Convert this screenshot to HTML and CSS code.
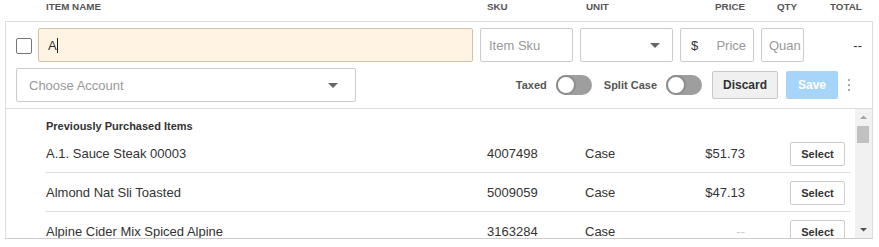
FILE: index.html
```html
<!DOCTYPE html>
<html lang="en">
<head>
    <meta charset="UTF-8">
    <meta name="viewport" content="width=device-width, initial-scale=1.0">
    <title>Add Item</title>
    <link rel="stylesheet" href="styles.css">
</head>
<body>
    <div class="header-row">
        <div></div>
        <div class="col-label label-name">Item Name</div>
        <div class="col-label label-sku">SKU</div>
        <div class="col-label label-unit">Unit</div>
        <div class="col-label label-price">Price</div>
        <div class="col-label label-qty">Qty</div>
        <div class="col-label label-total">Total</div>
    </div>

    <div class="item-box">
        <div class="entry-row">
            <span class="checkbox"></span>
            <div class="field field-name">A<span class="caret-line"></span></div>
            <div class="field placeholder">Item Sku</div>
            <div class="field select"><span></span><span class="arrow"></span></div>
            <div class="field price"><span class="dollar">$</span><span class="placeholder">Price</span></div>
            <div class="field placeholder qty">Quan</div>
            <div class="total">--</div>
        </div>

        <div class="options-row">
            <div class="field select account"><span class="placeholder">Choose Account</span><span class="arrow"></span></div>
            <div class="options-right">
                <span class="opt-label">Taxed</span>
                <span class="toggle"><span class="knob"></span></span>
                <span class="opt-label split">Split Case</span>
                <span class="toggle"><span class="knob"></span></span>
                <button class="btn btn-discard">Discard</button>
                <button class="btn btn-save">Save</button>
                <svg class="kebab" width="4" height="12" viewBox="0 0 4 12">
                    <rect x="1" y="0" width="2" height="2" fill="#aaa"/>
                    <rect x="1" y="5" width="2" height="2" fill="#aaa"/>
                    <rect x="1" y="10" width="2" height="2" fill="#aaa"/>
                </svg>
            </div>
        </div>

        <div class="list-area">
            <div class="list-content">
                <div class="list-title">Previously Purchased Items</div>
                <div class="list-row">
                    <span class="c-name">A.1. Sauce Steak 00003</span>
                    <span class="c-sku">4007498</span>
                    <span class="c-unit">Case</span>
                    <span class="c-price">$51.73</span>
                    <button class="btn-select">Select</button>
                </div>
                <div class="list-row">
                    <span class="c-name">Almond Nat Sli Toasted</span>
                    <span class="c-sku">5009059</span>
                    <span class="c-unit">Case</span>
                    <span class="c-price">$47.13</span>
                    <button class="btn-select">Select</button>
                </div>
                <div class="list-row">
                    <span class="c-name">Alpine Cider Mix Spiced Alpine</span>
                    <span class="c-sku">3163284</span>
                    <span class="c-unit">Case</span>
                    <span class="c-price empty">--</span>
                    <button class="btn-select">Select</button>
                </div>
            </div>
            <div class="scrollbar">
                <svg width="17" height="17" viewBox="0 0 17 17"><path d="M5 10 L8.5 6.5 L12 10 Z" fill="#a3a3a3"/></svg>
                <div class="thumb"></div>
                <div class="track-fill"></div>
                <svg width="17" height="17" viewBox="0 0 17 17"><path d="M5 7 L12 7 L8.5 10.5 Z" fill="#505050"/></svg>
            </div>
        </div>
    </div>
</body>
</html>
```

FILE: styles.css
```css
body {
    margin: 0;
    padding: 0 6px 0 5px;
    font-family: "Liberation Sans", Arial, sans-serif;
    color: #333;
    background-color: white;
}
.header-row,
.entry-row {
    display: grid;
    grid-template-columns: 15px 435px 93px 93px 74px 43px 1fr;
    column-gap: 7px;
    padding-left: 11px;
}
.header-row {
    height: 21px;
}
.col-label {
    font-size: 9.8px;
    font-weight: bold;
    text-transform: uppercase;
    color: #555;
    line-height: 14px;
}
.label-name { padding-left: 8px; }
.label-sku { padding-left: 7px; }
.label-unit { padding-left: 6px; }
.label-price { text-align: right; padding-right: 9px; }
.label-qty { padding-left: 16px; }
.label-total { padding-left: 19px; }
.item-box {
    border: 1px solid #ddd;
    border-bottom-color: #ccc;
}
.entry-row {
    padding-top: 6px;
    padding-left: 10px;
    height: 34px;
    align-items: center;
}
.checkbox {
    width: 16px;
    height: 16px;
    box-sizing: border-box;
    border: 1px solid #777;
    border-radius: 2px;
    margin-top: 2px;
}
.field {
    height: 34px;
    box-sizing: border-box;
    border: 1px solid #ccc;
    border-radius: 2px;
    font-size: 13px;
    display: flex;
    align-items: center;
    padding: 0 8px;
    overflow: hidden;
    white-space: nowrap;
}
.field-name {
    background-color: #fff4e3;
    border-color: #d3c3a4;
    padding-left: 9px;
    color: #333;
}
.caret-line {
    display: inline-block;
    width: 1px;
    height: 15px;
    background-color: #222;
}
.placeholder {
    color: #999;
}
.select {
    justify-content: space-between;
    padding-right: 12px;
}
.arrow {
    width: 0;
    height: 0;
    border-left: 5px solid transparent;
    border-right: 5px solid transparent;
    border-top: 5px solid #666;
}
.price {
    justify-content: space-between;
    padding: 0 7px 0 10px;
}
.dollar {
    color: #333;
}
.qty {
    padding-left: 7px;
}
.total {
    font-size: 13px;
    text-align: right;
    padding-right: 10px;
}
.options-row {
    display: flex;
    align-items: center;
    padding: 6px 0 6px 10px;
    border-bottom: 1px solid #ddd;
}
.account {
    width: 340px;
    height: 34px;
    padding-left: 12px;
    padding-right: 17px;
}
.options-right {
    margin-left: auto;
    display: flex;
    align-items: center;
    padding-right: 21px;
}
.opt-label {
    font-size: 11px;
    font-weight: bold;
    color: #555;
    margin-right: 9px;
}
.opt-label.split {
    margin-left: 12px;
}
.toggle {
    display: flex;
    align-items: center;
    width: 36px;
    height: 20px;
    border-radius: 10px;
    background-color: #9e9e9e;
}
.knob {
    width: 20px;
    height: 20px;
    box-sizing: border-box;
    border-radius: 50%;
    background-color: white;
    border: 2px solid #8c8c8c;
}
.btn {
    height: 28px;
    font-family: "Liberation Sans", Arial, sans-serif;
    font-size: 12px;
    font-weight: bold;
    border-radius: 2px;
}
.btn-discard {
    width: 66px;
    margin-left: 10px;
    background-color: #f0f0f0;
    border: 1px solid #c8c8c8;
    color: #333;
}
.btn-save {
    width: 52px;
    margin-left: 8px;
    background-color: #a7d5fa;
    border: none;
    color: white;
}
.kebab {
    margin-left: 9px;
}
.list-area {
    display: flex;
    height: 129px;
    overflow: hidden;
}
.list-content {
    flex: 1;
    padding: 0 4px 0 40px;
    overflow: hidden;
}
.list-title {
    font-size: 11px;
    font-weight: bold;
    padding-top: 10px;
    line-height: 15px;
    height: 25px;
    box-sizing: border-box;
}
.list-row {
    display: flex;
    align-items: center;
    height: 38px;
    border-bottom: 1px solid #ddd;
    font-size: 13px;
}
.c-name { width: 441px; }
.c-sku { width: 98px; }
.c-unit { width: 100px; }
.c-price {
    width: 60px;
    text-align: right;
}
.c-price.empty {
    color: #ccc;
}
.btn-select {
    margin-left: 45px;
    width: 55px;
    height: 24px;
    background-color: white;
    border: 1px solid #ccc;
    border-radius: 2px;
    font-family: "Liberation Sans", Arial, sans-serif;
    font-size: 11px;
    font-weight: bold;
    color: #333;
    margin-top: 2px;
}
.scrollbar {
    width: 17px;
    display: flex;
    flex-direction: column;
    background-color: #f1f1f1;
}
.thumb {
    width: 12px;
    height: 17px;
    margin-left: 2px;
    background-color: #c1c1c1;
}
.track-fill {
    flex: 1;
}
```
